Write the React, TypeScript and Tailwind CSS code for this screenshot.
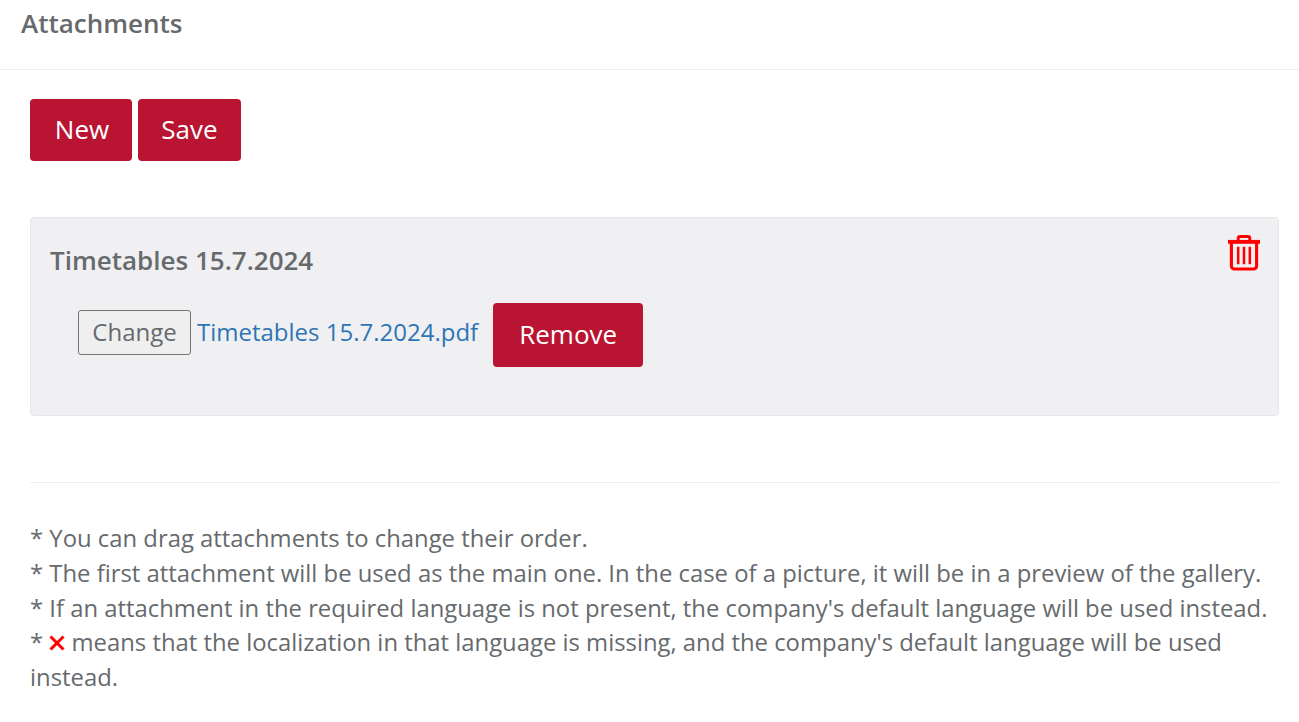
function TrashIcon() {
  return (
    <svg width="32" height="37" viewBox="0 0 33 38" fill="none" stroke="#ff0000" className="block">
      <path d="M0 7h33" strokeWidth="4" />
      <path d="M3.5 8v24a3 3 0 0 0 3 3h20a3 3 0 0 0 3-3V8" strokeWidth="3.2" />
      <path d="M10.5 6V3.5a2 2 0 0 1 2-2h8a2 2 0 0 1 2 2V6" strokeWidth="3" />
      <path d="M10.5 12v18M16.5 12v18M22.5 12v18" strokeWidth="2.6" />
    </svg>
  );
}

function CrossIcon() {
  return (
    <svg width="16" height="16" viewBox="0 0 16 16" fill="none" stroke="#ff0000" strokeWidth="3" className="inline-block align-baseline">
      <path d="M1.5 1.5l13 13M14.5 1.5l-13 13" />
    </svg>
  );
}

const btn = 'rounded bg-[#b91432] text-white font-normal text-[26px] pb-[2px]';

export default function App() {
  return (
    <div className="min-h-[722px] bg-white text-[#666a6d] font-['Open_Sans',sans-serif]">
      <div className="h-[70px] border-b border-[#eeeeee] px-[21px] pt-[6px]">
        <h2 className="text-[26px] leading-[34px] font-semibold">Attachments</h2>
      </div>

      <div className="pl-[30px] pr-[20px] pt-[29px]">
        <div className="flex gap-[6px]">
          <button className={`${btn} w-[102px] h-[62px] pl-[2px]`}>New</button>
          <button className={`${btn} w-[103px] h-[62px]`}>Save</button>
        </div>

        <div className="relative mt-[56px] h-[199px] rounded-sm border border-[#e7e7ea] bg-[#f0f0f2] pl-[19px] pt-[25px]">
          <h3 className="text-[26px] leading-[34px] font-semibold">Timetables 15.7.2024</h3>
          <div className="absolute right-[18px] top-[17px]">
            <TrashIcon />
          </div>
          <div className="mt-[26px] flex items-center pl-[28px]">
            <button className="h-[45px] w-[113px] rounded-[3px] border border-[#767676] bg-[#efefef] pb-[1px] text-[24px] text-[#666a6d] -mt-[5px]">
              Change
            </button>
            <a className="ml-[6px] text-[24px] leading-[30px] text-[#2e75b6] -mt-[6px]">Timetables 15.7.2024.pdf</a>
            <button className={`${btn} ml-[15px] w-[150px] h-[64px]`}>Remove</button>
          </div>
        </div>

        <div className="mt-[66px] border-t border-[#eeeeee] pt-[38px] text-[23.85px] leading-[34.8px]">
          <p>* You can drag attachments to change their order.</p>
          <p>* The first attachment will be used as the main one. In the case of a picture, it will be in a preview of the gallery.</p>
          <p>* If an attachment in the required language is not present, the company's default language will be used instead.</p>
          <p>
            * <CrossIcon /> means that the localization in that language is missing, and the company's default language will be used instead.
          </p>
        </div>
      </div>
    </div>
  );
}
